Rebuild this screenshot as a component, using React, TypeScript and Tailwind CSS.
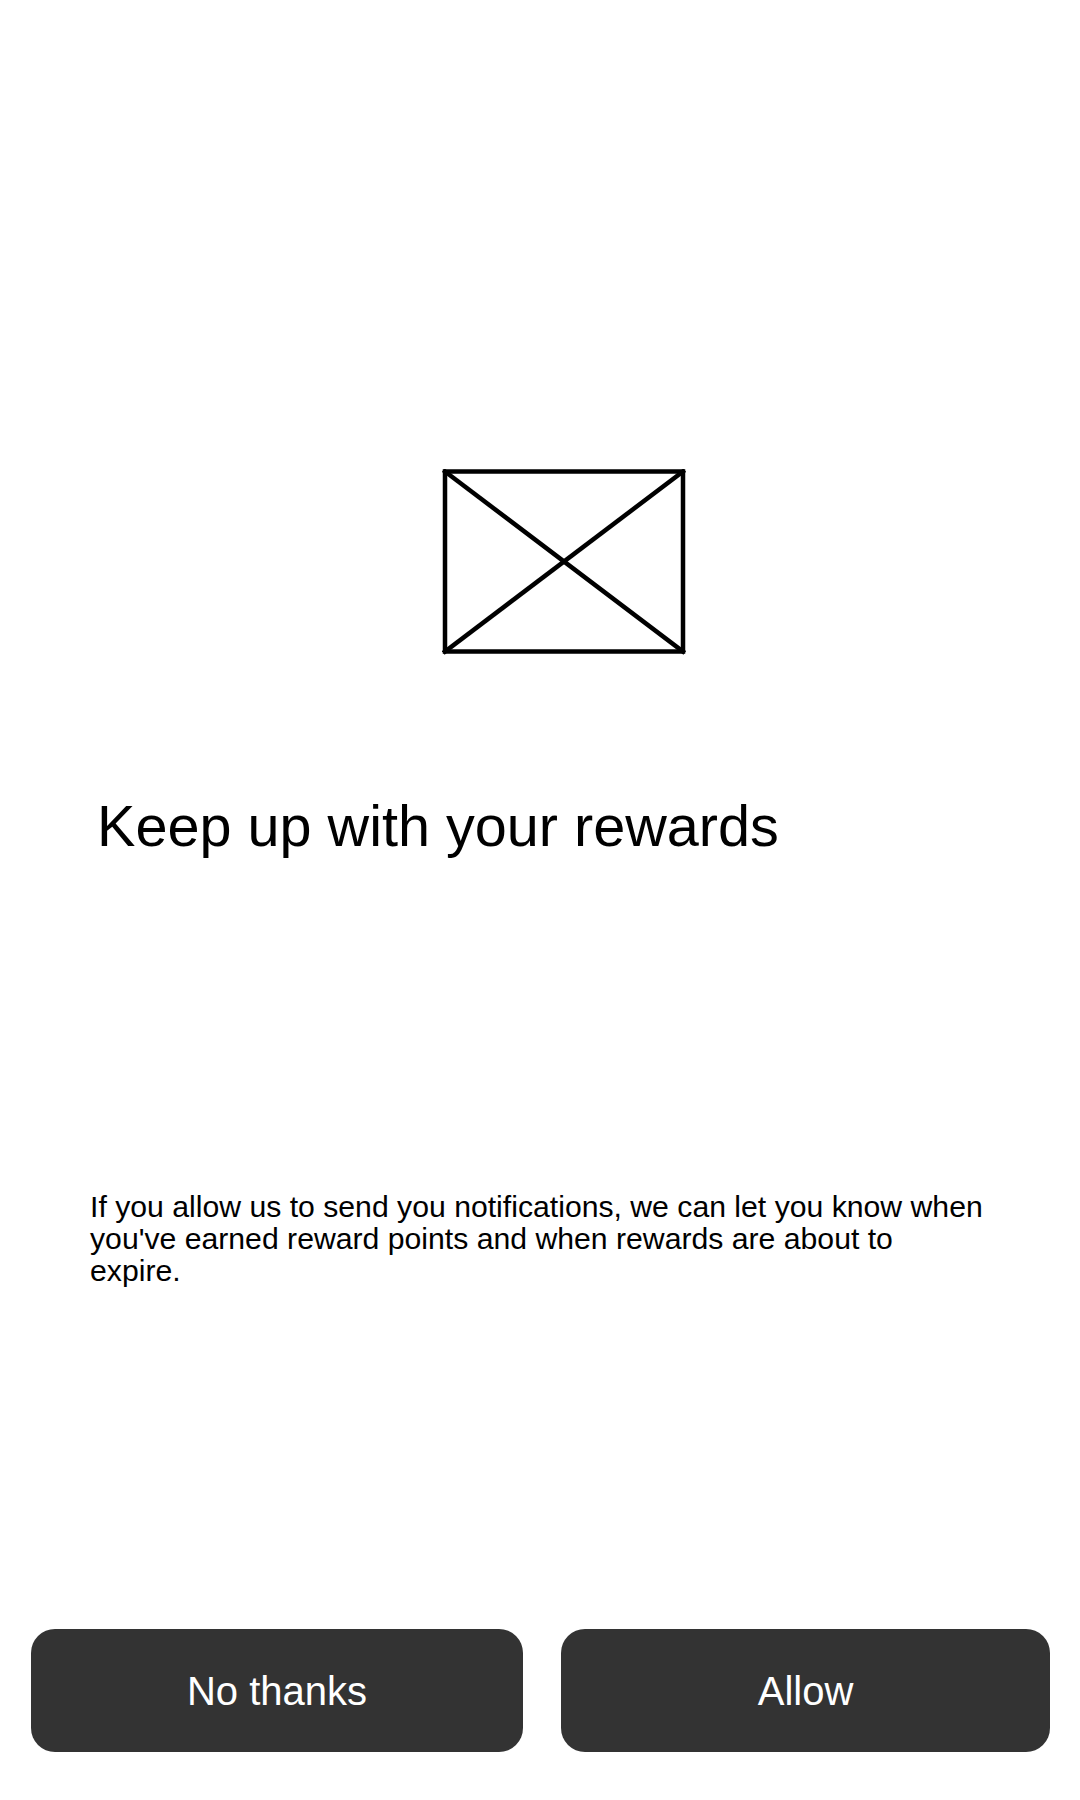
import React from 'react';

const EnvelopeIcon: React.FC = () => (
  <svg width="244" height="186" viewBox="0 0 244 186" fill="none" stroke="#000" strokeWidth="4.5" strokeLinecap="square">
    <rect x="3" y="2.5" width="238" height="180" />
    <path d="M3 2.5 L241 182.5" />
    <path d="M241 2.5 L3 182.5" />
  </svg>
);

export default function App() {
  return (
    <div
      className="w-[1080px] h-[1800px] bg-white flex flex-col text-black"
      style={{ fontFamily: '"Liberation Sans", Arial, sans-serif' }}
    >
      <div className="flex justify-center pl-[48px] pt-[469px]">
        <EnvelopeIcon />
      </div>

      <h1 className="mt-[139px] pl-[97px] text-[57.6px] leading-[64px] font-normal">
        Keep up with your rewards
      </h1>

      <p className="mt-[333px] ml-[90px] w-[896px] text-[30.2px] leading-[32px]">
        If you allow us to send you notifications, we can let you know when you've earned reward points and when rewards are about to expire.
      </p>

      <div className="mt-auto mb-[48px] flex gap-[38px] pl-[31px] pr-[30px]">
        <button className="w-[492px] h-[123px] rounded-[24px] bg-[#333333] text-white text-[40px]">
          No thanks
        </button>
        <button className="w-[489px] h-[123px] rounded-[24px] bg-[#333333] text-white text-[40px]">
          Allow
        </button>
      </div>
    </div>
  );
}
